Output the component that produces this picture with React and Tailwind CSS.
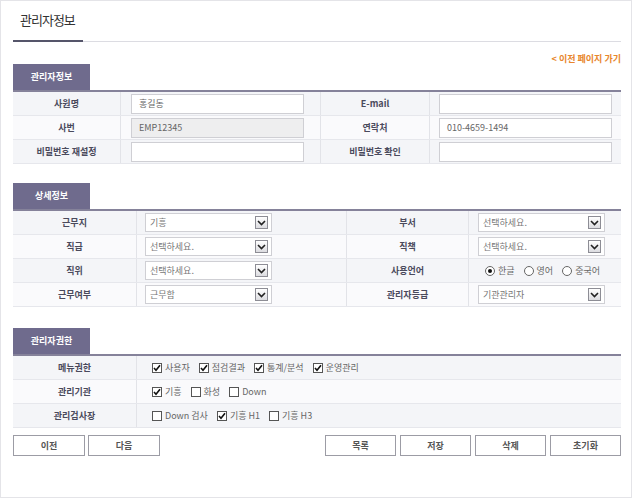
import React from "react";

const font = { fontFamily: '"Noto Sans CJK KR", "Noto Sans", sans-serif' };

function Arrow() {
  return (
    <span className="absolute right-[3px] top-[2px] w-[13px] h-[13px] border border-[#8d8d95] bg-gradient-to-b from-white to-[#dcdce0] flex items-center justify-center">
      <svg width="9" height="6" viewBox="0 0 9 6">
        <path d="M1 1 L4.5 4.5 L8 1" fill="none" stroke="#222" strokeWidth="1.6" />
      </svg>
    </span>
  );
}

function Select({ value }) {
  return (
    <div className="relative w-[127px] h-[19px] border border-[#cfcfd4] bg-white text-[9px] text-[#777] leading-[17px] pl-[4px]">
      {value}
      <Arrow />
    </div>
  );
}

function Input({ value, disabled }) {
  return (
    <div
      className={
        "w-[173px] h-[20px] border border-[#cfcfd4] text-[9px] text-[#666] leading-[18px] pl-[7px] " +
        (disabled ? "bg-[#eeeeef]" : "bg-white")
      }
    >
      {value}
    </div>
  );
}

function Check({ checked, label }) {
  return (
    <span className="flex items-center gap-[3px] text-[9px] text-[#666]">
      <span className="w-[10px] h-[10px] border border-[#555] bg-white flex items-center justify-center">
        {checked && (
          <svg width="8" height="8" viewBox="0 0 8 8">
            <path d="M1 4 L3 6.3 L7 1.2" fill="none" stroke="#111" strokeWidth="1.6" />
          </svg>
        )}
      </span>
      {label}
    </span>
  );
}

function Radio({ checked, label }) {
  return (
    <span className="flex items-center gap-[3px] text-[9px] text-[#666]">
      <span className="w-[10px] h-[10px] rounded-full border border-[#666] bg-white flex items-center justify-center">
        {checked && <span className="w-[4px] h-[4px] rounded-full bg-[#111]" />}
      </span>
      {label}
    </span>
  );
}

function Tab({ children }) {
  return (
    <div className="w-[77px] h-[26px] bg-[#6f6b8d] text-white text-[9px] font-bold flex items-center justify-center">
      {children}
    </div>
  );
}

const labelCls =
  "flex items-center justify-center text-[9px] font-bold text-[#4a4a5c] border-r border-[#e2e3e8] whitespace-nowrap";

export default function App() {
  const rowBg = (i) => (i % 2 === 0 ? "bg-[#f4f5f8]" : "bg-[#fafafc]");
  return (
    <div
      className="w-[632px] h-[498px] border border-[#e4e4e8] bg-white pl-[12px] pr-[10px]"
      style={font}
    >
      {/* title */}
      <div className="h-[41px] border-b border-[#dcdce2] flex items-end">
        <div className="w-[70px] h-[41px] border-b-2 border-[#55556a] mb-[-1px] pl-[7px] pt-[9px] text-[13px] tracking-[-1px] text-[#333] leading-[20px] whitespace-nowrap">
          관리자정보
        </div>
      </div>
      <div className="mt-[11px] h-[12px] text-right text-[9px] font-bold text-[#e8862c] leading-[12px]">
        &lt; 이전 페이지 가기
      </div>

      {/* section 1 */}
      <div className="mt-[-1px]">
        <Tab>관리자정보</Tab>
        <div className="border-t-2 border-[#85829a]">
          {[
            ["사원명", <Input value="홍길동" />, "E-mail", <Input value="" />],
            ["사번", <Input value="EMP12345" disabled />, "연락처", <Input value="010-4659-1494" />],
            ["비밀번호 재설정", <Input value="" />, "비밀번호 확인", <Input value="" />],
          ].map((r, i) => (
            <div
              key={i}
              className={"grid grid-cols-[108px_200px_109px_1fr] h-[24px] border-b border-[#e6e7ec] " + rowBg(i)}
            >
              <div className={labelCls}>{r[0]}</div>
              <div className="flex items-center pl-[10px] border-r border-[#e2e3e8]">{r[1]}</div>
              <div className={labelCls}>{r[2]}</div>
              <div className="flex items-center pl-[9px]">{r[3]}</div>
            </div>
          ))}
        </div>
      </div>

      {/* section 2 */}
      <div className="mt-[19px]">
        <Tab>상세정보</Tab>
        <div className="border-t-2 border-[#85829a]">
          {[
            ["근무지", <Select value="기흥" />, "부서", <Select value="선택하세요." />],
            ["직급", <Select value="선택하세요." />, "직책", <Select value="선택하세요." />],
            [
              "직위",
              <Select value="선택하세요." />,
              "사용언어",
              <div className="flex items-center gap-[9px] pl-[7px]">
                <Radio checked label="한글" />
                <Radio label="영어" />
                <Radio label="중국어" />
              </div>,
            ],
            ["근무여부", <Select value="근무함" />, "관리자등급", <Select value="기관관리자" />],
          ].map((r, i) => (
            <div
              key={i}
              className={"grid grid-cols-[124px_210px_122px_1fr] h-[24px] border-b border-[#e6e7ec] " + rowBg(i)}
            >
              <div className={labelCls}>{r[0]}</div>
              <div className="flex items-center pl-[8px] border-r border-[#e2e3e8]">{r[1]}</div>
              <div className={labelCls}>{r[2]}</div>
              <div className="flex items-center pl-[9px]">{r[3]}</div>
            </div>
          ))}
        </div>
      </div>

      {/* section 3 */}
      <div className="mt-[21px]">
        <Tab>관리자권한</Tab>
        <div className="border-t-2 border-[#85829a]">
          {[
            [
              "메뉴권한",
              [
                [true, "사용자"],
                [true, "점검결과"],
                [true, "통계/분석"],
                [true, "운영관리"],
              ],
            ],
            [
              "관리기관",
              [
                [true, "기흥"],
                [false, "화성"],
                [false, "Down"],
              ],
            ],
            [
              "관리검사장",
              [
                [false, "Down 검사"],
                [true, "기흥 H1"],
                [false, "기흥 H3"],
              ],
            ],
          ].map((r, i) => (
            <div
              key={i}
              className={"grid grid-cols-[124px_1fr] h-[24px] border-b border-[#e6e7ec] " + rowBg(i)}
            >
              <div className={labelCls}>{r[0]}</div>
              <div className="flex items-center gap-[9px] pl-[15px]">
                {r[1].map(([c, l], j) => (
                  <Check key={j} checked={c} label={l} />
                ))}
              </div>
            </div>
          ))}
        </div>
      </div>

      {/* buttons */}
      <div className="mt-[7px] flex justify-between">
        <div className="flex gap-[3px]">
          {["이전", "다음"].map((b) => (
            <div
              key={b}
              className="w-[72px] h-[21px] border border-[#9c9ca5] bg-white text-[9px] font-bold text-[#555] flex items-center justify-center"
            >
              {b}
            </div>
          ))}
        </div>
        <div className="flex gap-[4px]">
          {["목록", "저장", "삭제", "초기화"].map((b) => (
            <div
              key={b}
              className="w-[71px] h-[21px] border border-[#9c9ca5] bg-white text-[9px] font-bold text-[#555] flex items-center justify-center"
            >
              {b}
            </div>
          ))}
        </div>
      </div>
    </div>
  );
}
